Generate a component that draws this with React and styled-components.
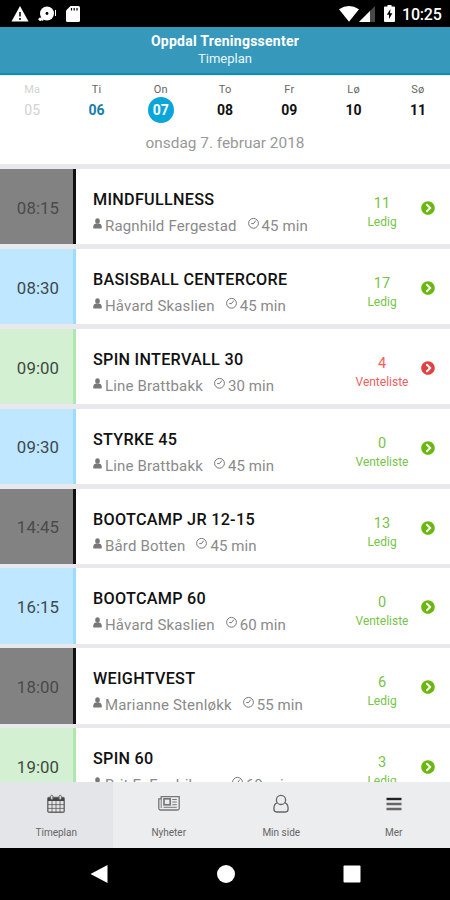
import React from "react";
import styled, { createGlobalStyle } from "styled-components";
import { FaChevronCircleRight } from "react-icons/fa";

const GlobalStyle = createGlobalStyle`
  * {
    box-sizing: border-box;
  }
  body {
    margin: 0;
    background-color: white;
    font-family: Roboto, "Liberation Sans", sans-serif;
  }
  svg {
    display: block;
    flex: none;
  }
`;

const Screen = styled.div`
  width: 450px;
  height: 900px;
  display: flex;
  flex-direction: column;
  overflow: hidden;
  background-color: white;
`;

const StatusBar = styled.div`
  height: 27px;
  flex: none;
  display: flex;
  align-items: center;
  justify-content: space-between;
  padding: 0 8px 0 11px;
  background-color: black;
  color: white;
`;

const StatusGroup = styled.div`
  display: flex;
  align-items: center;
`;

const StatusLeft = styled(StatusGroup)`
  gap: 9px;
`;

const Battery = styled.div`
  margin-left: 9px;
`;

const Clock = styled.span`
  margin-left: 7px;
  width: 40px;
  font-size: 16px;
  line-height: 27px;
  font-weight: 500;
  padding-top: 1px;
  letter-spacing: -0.2px;
  white-space: nowrap;
`;

const Header = styled.header`
  height: 48px;
  flex: none;
  display: flex;
  flex-direction: column;
  align-items: center;
  padding-top: 5px;
  background-color: #3699bb;
  border-bottom: 2px solid #168bb1;
  box-shadow: 0 1px 0 #d4f4fd;
  color: white;
`;

const HeaderTitle = styled.h1`
  margin: 0;
  font-size: 14px;
  line-height: 18px;
  font-weight: 700;
  letter-spacing: 0.25px;
`;

const HeaderSubtitle = styled.div`
  font-size: 13px;
  line-height: 18px;
  color: #e9f7fb;
`;

const Week = styled.div`
  height: 88.5px;
  flex: none;
  padding-top: 8px;
`;

const Days = styled.div`
  display: flex;
  width: 450px;
`;

const Day = styled.div`
  flex: 0 0 64.3px;
  display: flex;
  flex-direction: column;
  align-items: center;
`;

const DayName = styled.span`
  font-size: 11px;
  line-height: 13px;
  letter-spacing: 0.2px;
  color: ${(props) => (props.$past ? "#d2d2d2" : "#666")};
`;

const DayNumber = styled.span`
  width: 26px;
  height: 26px;
  margin-top: 1px;
  border-radius: 50%;
  font-size: 14px;
  line-height: 27px;
  text-align: center;
  font-weight: ${(props) => (props.$past ? 400 : 700)};
  color: ${(props) => props.$color};
  background-color: ${(props) => (props.$selected ? "#0aa5d9" : "transparent")};
`;

const DateText = styled.div`
  margin-top: 10px;
  font-size: 15.4px;
  line-height: 20px;
  text-align: center;
  color: #999;
`;

const List = styled.div`
  flex: 1;
  min-height: 0;
  overflow: hidden;
  display: flex;
  flex-direction: column;
  gap: 4.6px;
  padding-top: 5.7px;
  background-color: #e9e9ed;
`;

const Row = styled.div`
  flex: none;
  height: 75.25px;
  display: flex;
  background-color: white;
`;

const TIME_COLORS = {
  grey: { back: "#828282", edge: "#111", text: "#4a4a4a" },
  blue: { back: "#bfe7ff", edge: "#9bdcff", text: "#3c4950" },
  green: { back: "#d3f0d3", edge: "#aee8ae", text: "#3f4a3f" },
};

const Time = styled.div`
  width: 76px;
  padding: 2px 0 0 3px;
  display: flex;
  align-items: center;
  justify-content: center;
  font-size: 16.8px;
  letter-spacing: 0.1px;
  color: ${(props) => TIME_COLORS[props.$kind].text};
  background-color: ${(props) => TIME_COLORS[props.$kind].back};
  border-right: 3px solid ${(props) => TIME_COLORS[props.$kind].edge};
`;

const Info = styled.div`
  flex: 1;
  padding: 20px 0 0 17px;
  white-space: nowrap;
`;

const Title = styled.div`
  font-size: 16.2px;
  line-height: 22px;
  font-weight: 500;
  letter-spacing: 0.28px;
  color: #111;
`;

const Details = styled.div`
  display: flex;
  margin-top: 5px;
  font-size: 15px;
  line-height: 20px;
  color: #8a8a8a;
`;

const Trainer = styled.span`
  margin: 0 11px 0 3px;
  letter-spacing: 0.17px;
`;

const Duration = styled.span`
  margin-left: 3px;
  letter-spacing: 0.1px;
`;

const Spots = styled.div`
  width: 64px;
  padding-top: 25px;
  text-align: center;
  color: ${(props) => (props.$full ? "#ee6060" : "#78c348")};
`;

const Count = styled.div`
  font-size: 14.5px;
  line-height: 20px;
`;

const SpotsLabel = styled.div`
  font-size: 12px;
  line-height: 17px;
`;

const Arrow = styled.div`
  width: 36px;
  padding: 32px 0 0 7px;
  color: ${(props) => (props.$full ? "#e04242" : "#68b80e")};
`;

const TabBar = styled.nav`
  height: 66px;
  flex: none;
  display: grid;
  grid-template-columns: repeat(4, 1fr);
  background-color: #ecedef;
`;

const Tab = styled.div`
  display: flex;
  flex-direction: column;
  align-items: center;
  padding-top: 12px;
  background-color: ${(props) => (props.$active ? "#e4e5e8" : "transparent")};
  color: #666;
`;

const TabLabel = styled.span`
  margin-top: 12px;
  font-size: 10px;
  line-height: 14px;
`;

const NavBar = styled.div`
  height: 52px;
  flex: none;
  display: flex;
  justify-content: space-between;
  align-items: center;
  padding: 0 89px 0 90px;
  background-color: black;
`;

const PersonIcon = () => (
  <svg width="9" height="20" viewBox="0 0 9 20" fill="#777">
    <ellipse cx="4.5" cy="5" rx="2.3" ry="2.8" />
    <path d="M0.3 12.5V10.2Q0.5 8 3 7.6H6Q8.5 8 8.7 10.2V12.5Z" />
  </svg>
);

const ClockIcon = () => (
  <svg width="11" height="20" viewBox="0 0 11 20" fill="none" stroke="#777">
    <circle cx="5.5" cy="7.3" r="4.9" />
    <path d="M5.5 7.6L7.8 4.6M5.7 7.6H3.2" />
  </svg>
);

const WarningIcon = () => (
  <svg width="18" height="16" viewBox="0 0 18 16">
    <path d="M9 0L17.5 15.5H0.5Z" fill="white" />
    <path d="M9 6v4.5M9 12v2" stroke="black" strokeWidth="1.5" />
  </svg>
);

const DiscIcon = () => (
  <svg width="19" height="16" viewBox="0 0 19 16" fill="white">
    <circle cx="9" cy="7.5" r="7" />
    <circle cx="9" cy="7.5" r="1.4" fill="black" />
    <circle cx="2.3" cy="13.2" r="1.8" />
    <path d="M17 4h1v6h-1zM3 10l3 4-2 1z" />
  </svg>
);

const SdCardIcon = () => (
  <svg width="14" height="16" viewBox="0 0 14 16">
    <path d="M4.5 0H12.5Q14 0 14 1.5V14.5Q14 16 12.5 16H1.5Q0 16 0 14.5V4.5Z" fill="white" />
    <path d="M5.5 2v2.5M8.2 2v2.5M11 2v2.5" stroke="black" strokeWidth="1.2" />
  </svg>
);

const WifiIcon = () => (
  <svg width="20" height="16" viewBox="0 0 20 16">
    <path d="M0 3.2Q10 -3.2 20 3.2L10 15.8Z" fill="white" />
  </svg>
);

const SignalIcon = () => (
  <svg width="16" height="16" viewBox="0 0 16 16">
    <path d="M16 0V16H0Z" fill="#484848" />
    <path d="M11 5V16H0Z" fill="white" />
  </svg>
);

const BatteryIcon = () => (
  <svg width="11" height="17" viewBox="0 0 11 17">
    <path d="M3.5 0H7.5V1.5H10Q11 1.5 11 2.5V16Q11 17 10 17H1Q0 17 0 16V2.5Q0 1.5 1 1.5H3.5Z" fill="white" />
    <path d="M6.5 4L2.8 9.8H5V14L8.4 8.2H6Z" fill="black" />
  </svg>
);

const CalendarIcon = () => (
  <svg width="18" height="20" viewBox="0 0 18 20" fill="none" stroke="#666">
    <rect x="0.8" y="3.5" width="16.4" height="14.7" rx="1.2" strokeWidth="1.4" />
    <path d="M1 4h16v3H1z" fill="#444" stroke="none" />
    <path d="M1 10.6h16M1 14.4h16M5 7v11M9 7v11M13 7v11" strokeWidth="0.9" />
    <rect x="3.7" y="1.3" width="2.2" height="4.2" rx="1" fill="#eee" />
    <rect x="12.1" y="1.3" width="2.2" height="4.2" rx="1" fill="#eee" />
  </svg>
);

const NewsIcon = () => (
  <svg width="22" height="20" viewBox="0 0 22 20" fill="none" stroke="#777">
    <path d="M3.2 2.7H21.2V14.5Q21.2 16 19.5 16H2.8Q0.8 16 0.8 14V4.8H3.2Z" strokeWidth="1.3" />
    <path d="M3.2 4.8V14" />
    <rect x="6" y="4.8" width="6.2" height="6" strokeWidth="1.7" />
    <path d="M14.3 5.5h4.5M14.3 8h4.5M14.3 10.7h4.5M5.5 13.3h13.3" />
  </svg>
);

const UserIcon = () => (
  <svg width="16" height="20" viewBox="0 0 16 20" fill="none" stroke="#666" strokeWidth="1.3">
    <circle cx="8" cy="5.9" r="4.6" />
    <path d="M4.2 8.8Q0.9 9.5 0.9 14.8Q0.9 18 3.5 18H12.5Q15.1 18 15.1 14.8Q15.1 9.5 11.8 8.8" />
  </svg>
);

const MenuIcon = () => (
  <svg width="16" height="20" viewBox="0 0 16 20" strokeWidth="2.4">
    <path d="M0.5 5h15" stroke="#222" />
    <path d="M0.5 10h15M0.5 15h15" stroke="#666" />
  </svg>
);

const days = [
  { name: "Ma", number: "05", color: "#d2d2d2", past: true },
  { name: "Ti", number: "06", color: "#147eaa" },
  { name: "On", number: "07", color: "white", selected: true },
  { name: "To", number: "08", color: "#111" },
  { name: "Fr", number: "09", color: "#111" },
  { name: "Lø", number: "10", color: "#111" },
  { name: "Sø", number: "11", color: "#111" },
];

const classes = [
  { time: "08:15", kind: "grey", title: "MINDFULLNESS", trainer: "Ragnhild Fergestad", duration: "45 min", count: 11, label: "Ledig" },
  { time: "08:30", kind: "blue", title: "BASISBALL CENTERCORE", trainer: "Håvard Skaslien", duration: "45 min", count: 17, label: "Ledig" },
  { time: "09:00", kind: "green", title: "SPIN INTERVALL 30", trainer: "Line Brattbakk", duration: "30 min", count: 4, label: "Venteliste", full: true },
  { time: "09:30", kind: "blue", title: "STYRKE 45", trainer: "Line Brattbakk", duration: "45 min", count: 0, label: "Venteliste" },
  { time: "14:45", kind: "grey", title: "BOOTCAMP JR 12-15", trainer: "Bård Botten", duration: "45 min", count: 13, label: "Ledig" },
  { time: "16:15", kind: "blue", title: "BOOTCAMP 60", trainer: "Håvard Skaslien", duration: "60 min", count: 0, label: "Venteliste" },
  { time: "18:00", kind: "grey", title: "WEIGHTVEST", trainer: "Marianne Stenløkk", duration: "55 min", count: 6, label: "Ledig" },
  { time: "19:00", kind: "green", title: "SPIN 60", trainer: "Brit E. Fredriksen", duration: "60 min", count: 3, label: "Ledig" },
];

const tabs = [
  { label: "Timeplan", Icon: CalendarIcon, active: true },
  { label: "Nyheter", Icon: NewsIcon },
  { label: "Min side", Icon: UserIcon },
  { label: "Mer", Icon: MenuIcon },
];

const App = () => {
  return (
    <>
      <GlobalStyle />
      <Screen>
        <StatusBar>
          <StatusLeft>
            <WarningIcon />
            <DiscIcon />
            <SdCardIcon />
          </StatusLeft>
          <StatusGroup>
            <WifiIcon />
            <SignalIcon />
            <Battery>
              <BatteryIcon />
            </Battery>
            <Clock>10:25</Clock>
          </StatusGroup>
        </StatusBar>
        <Header>
          <HeaderTitle>Oppdal Treningssenter</HeaderTitle>
          <HeaderSubtitle>Timeplan</HeaderSubtitle>
        </Header>
        <Week>
          <Days>
            {days.map((day) => (
              <Day key={day.number}>
                <DayName $past={day.past}>{day.name}</DayName>
                <DayNumber $color={day.color} $past={day.past} $selected={day.selected}>
                  {day.number}
                </DayNumber>
              </Day>
            ))}
          </Days>
          <DateText>onsdag 7. februar 2018</DateText>
        </Week>
        <List>
          {classes.map((item) => (
            <Row key={item.time}>
              <Time $kind={item.kind}>{item.time}</Time>
              <Info>
                <Title>{item.title}</Title>
                <Details>
                  <PersonIcon />
                  <Trainer>{item.trainer}</Trainer>
                  <ClockIcon />
                  <Duration>{item.duration}</Duration>
                </Details>
              </Info>
              <Spots $full={item.full}>
                <Count>{item.count}</Count>
                <SpotsLabel>{item.label}</SpotsLabel>
              </Spots>
              <Arrow $full={item.full}>
                <FaChevronCircleRight size={14} />
              </Arrow>
            </Row>
          ))}
        </List>
        <TabBar>
          {tabs.map(({ label, Icon, active }) => (
            <Tab key={label} $active={active}>
              <Icon />
              <TabLabel>{label}</TabLabel>
            </Tab>
          ))}
        </TabBar>
        <NavBar>
          <svg width="18" height="18" viewBox="0 0 18 18" fill="white">
            <path d="M17.5 0V18L0.5 9Z" />
          </svg>
          <svg width="18" height="18" viewBox="0 0 18 18" fill="white">
            <circle cx="9" cy="9" r="9" />
          </svg>
          <svg width="18" height="18" viewBox="0 0 18 18" fill="white">
            <rect x="0.5" y="0.5" width="17" height="17" rx="1" />
          </svg>
        </NavBar>
      </Screen>
    </>
  );
};

export default App;
